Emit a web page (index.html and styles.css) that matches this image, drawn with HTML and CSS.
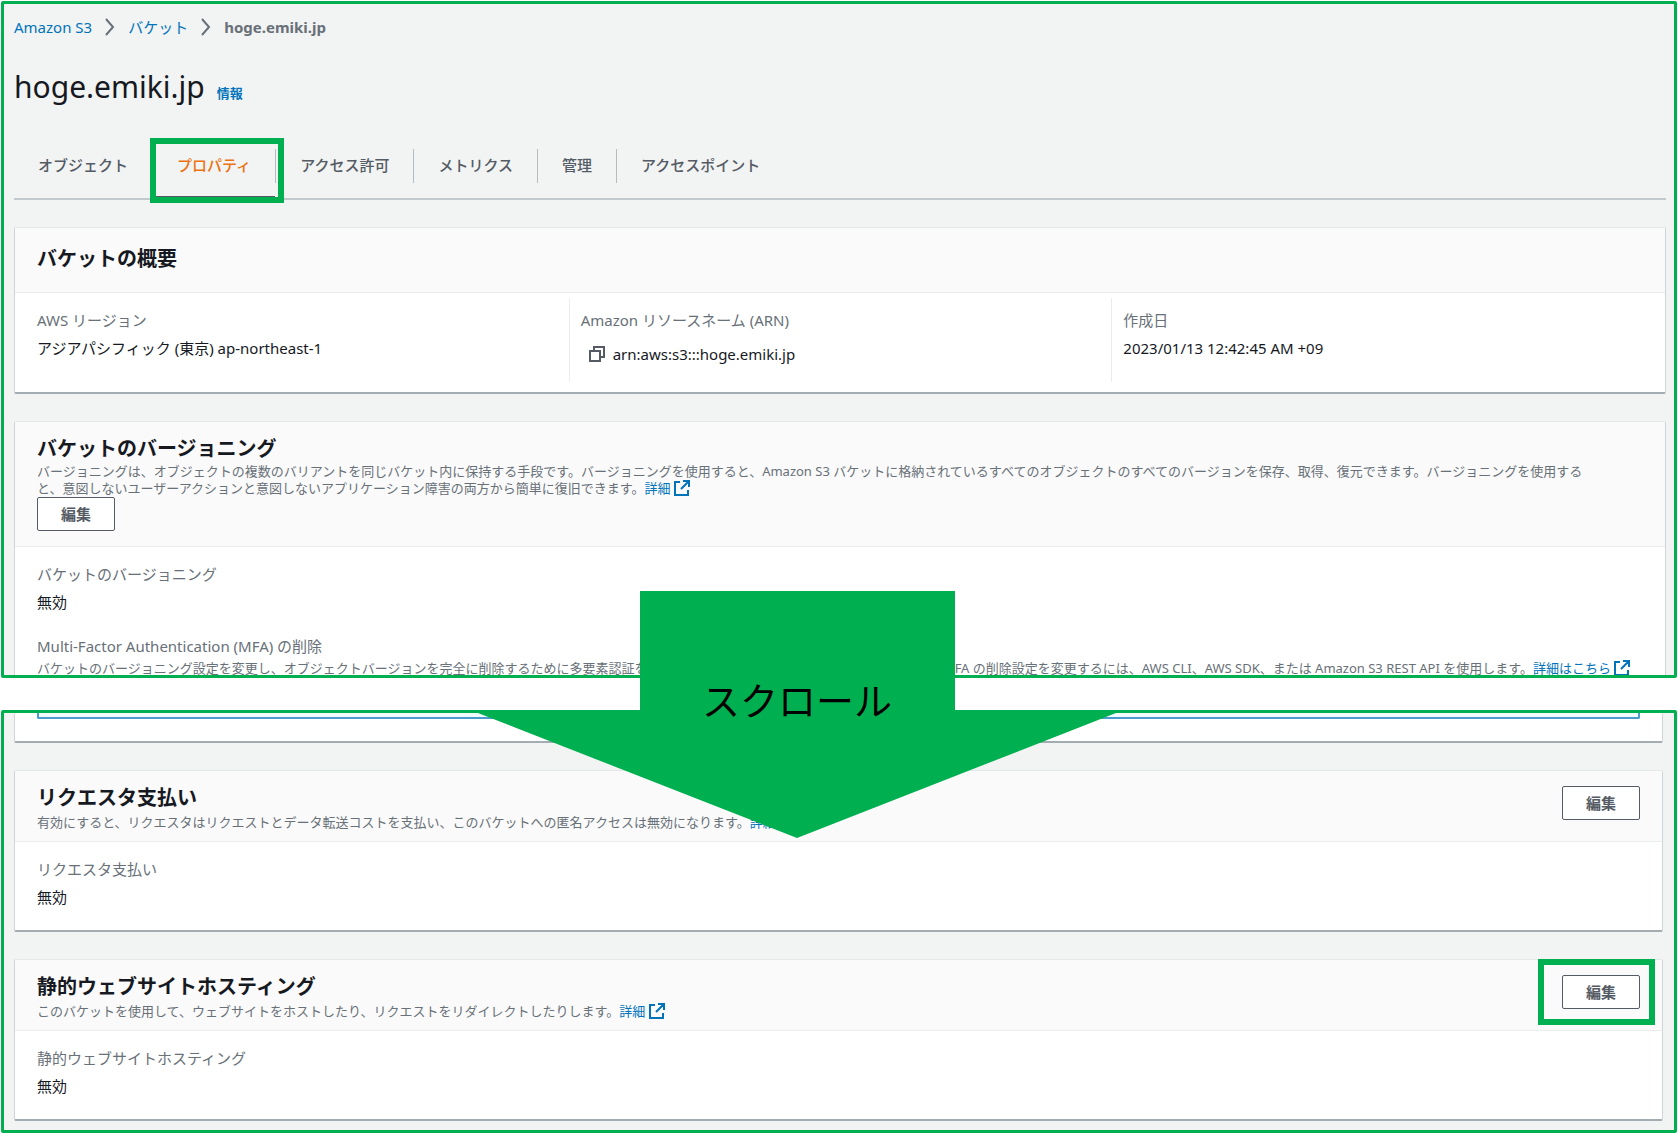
FILE: index.html
```
<!DOCTYPE html>
<html lang="ja">
<head>
  <meta charset="UTF-8">
  <meta name="viewport" content="width=device-width, initial-scale=1.0">
  <title>hoge.emiki.jp - Amazon S3</title>
  <link rel="stylesheet" href="styles.css">
</head>
<body>
  <main class="page">
    <section class="frame">
      <nav class="breadcrumb" aria-label="breadcrumb">
        <a href="#">Amazon S3</a>
        <svg class="chevron" viewBox="0 0 10 18"><path d="M1 1l7 8-7 8"/></svg>
        <a href="#">バケット</a>
        <svg class="chevron" viewBox="0 0 10 18"><path d="M1 1l7 8-7 8"/></svg>
        <span class="current">hoge.emiki.jp</span>
      </nav>

      <div class="title">
        <h1>hoge.emiki.jp</h1>
        <a href="#">情報</a>
      </div>

      <nav class="tabs">
        <a href="#">オブジェクト</a>
        <a href="#" class="active">プロパティ</a>
        <a href="#">アクセス許可</a>
        <a href="#">メトリクス</a>
        <a href="#">管理</a>
        <a href="#">アクセスポイント</a>
      </nav>

      <div class="card">
        <div class="card-header simple">
          <h2>バケットの概要</h2>
        </div>
        <dl class="columns">
          <div>
            <dt>AWS リージョン</dt>
            <dd>アジアパシフィック (東京) ap-northeast-1</dd>
          </div>
          <div>
            <dt>Amazon リソースネーム (ARN)</dt>
            <dd class="arn">
              <button type="button" class="copy" aria-label="コピー">
                <svg viewBox="0 0 16 16"><path d="M1 5h10v10H1zM5 5V1h10v10h-4"/></svg>
              </button>
              arn:aws:s3:::hoge.emiki.jp
            </dd>
          </div>
          <div>
            <dt>作成日</dt>
            <dd>2023/01/13 12:42:45 AM +09</dd>
          </div>
        </dl>
      </div>

      <div class="card">
        <div class="card-header stacked">
          <div>
            <h2>バケットのバージョニング</h2>
            <p>バージョニングは、オブジェクトの複数のバリアントを同じバケット内に保持する手段です。バージョニングを使用すると、Amazon S3 バケットに格納されているすべてのオブジェクトのすべてのバージョンを保存、取得、復元できます。バージョニングを使用すると、意図しないユーザーアクションと意図しないアプリケーション障害の両方から簡単に復旧できます。<a href="#">詳細 <svg class="external" viewBox="0 0 16 16"><path d="M6 2H1v13h13v-5M9 1h6v6M15 1L7 9"/></svg></a></p>
          </div>
          <button type="button" class="edit">編集</button>
        </div>
        <dl class="fields">
          <div>
            <dt>バケットのバージョニング</dt>
            <dd>無効</dd>
          </div>
          <div>
            <dt>Multi-Factor Authentication (MFA) の削除</dt>
            <dd class="note">バケットのバージョニング設定を変更し、オブジェクトバージョンを完全に削除するために多要素認証を必要とする、セキュリティの追加のレイヤーです。MFA の削除設定を変更するには、AWS CLI、AWS SDK、または Amazon S3 REST API を使用します。<a href="#">詳細はこちら <svg class="external" viewBox="0 0 16 16"><path d="M6 2H1v13h13v-5M9 1h6v6M15 1L7 9"/></svg></a></dd>
          </div>
        </dl>
      </div>
    </section>

    <section class="frame lower">
      <div class="card cut">
        <div class="info-box"></div>
      </div>

      <div class="card">
        <div class="card-header">
          <div>
            <h2>リクエスタ支払い</h2>
            <p>有効にすると、リクエスタはリクエストとデータ転送コストを支払い、このバケットへの匿名アクセスは無効になります。<a href="#">詳細</a></p>
          </div>
          <button type="button" class="edit">編集</button>
        </div>
        <dl class="fields">
          <div>
            <dt>リクエスタ支払い</dt>
            <dd>無効</dd>
          </div>
        </dl>
      </div>

      <div class="card">
        <div class="card-header">
          <div>
            <h2>静的ウェブサイトホスティング</h2>
            <p>このバケットを使用して、ウェブサイトをホストしたり、リクエストをリダイレクトしたりします。<a href="#">詳細 <svg class="external" viewBox="0 0 16 16"><path d="M6 2H1v13h13v-5M9 1h6v6M15 1L7 9"/></svg></a></p>
          </div>
          <button type="button" class="edit marked">編集</button>
        </div>
        <dl class="fields">
          <div>
            <dt>静的ウェブサイトホスティング</dt>
            <dd>無効</dd>
          </div>
        </dl>
      </div>
    </section>

    <div class="arrow">スクロール</div>
  </main>
</body>
</html>
```
FILE: styles.css
```
* {
  box-sizing: border-box;
}

body {
  margin: 0;
  background: #fff;
  color: #16191f;
  font-family: "Noto Sans", "Noto Sans CJK JP", sans-serif;
  font-size: 15px;
  line-height: 24px;
}

h1, h2, p, dl, dd {
  margin: 0;
}

a {
  color: #0073bb;
  text-decoration: none;
}

svg {
  fill: none;
  stroke: currentColor;
  stroke-width: 2;
}

/* Two framed views, the upper one cut off at its lower edge */
.page {
  position: relative;
  display: grid;
  grid-template-rows: 8fr 5fr;
  gap: 32px;
  height: 100vh;
  padding: 1px 1px 0;
}

.frame {
  min-height: 0;
  overflow: hidden;
  border: 3px solid #00b050;
  border-radius: 2px;
  background: #f2f3f3;
  padding: 0 8px 0 10px;
}

.lower {
  padding-right: 11px;
}

/* Page heading */
.breadcrumb {
  display: flex;
  align-items: center;
  gap: 13px;
  padding-top: 11px;
}

.chevron {
  width: 10px;
  height: 18px;
  color: #687078;
}

.current {
  color: #687078;
  font-weight: 700;
}

.title {
  display: flex;
  align-items: baseline;
  gap: 12px;
  margin-top: 28px;
}

.title h1 {
  font-size: 30px;
  font-weight: 400;
  line-height: 40px;
}

.title a {
  font-size: 13px;
  font-weight: 700;
}

/* Tabs */
.tabs {
  display: flex;
  margin-top: 42px;
  padding-bottom: 15px;
  border-bottom: 2px solid #c1c9cc;
}

.tabs a {
  position: relative;
  padding: 4px 24px 6px;
  border-right: 1px solid #b3bcc0;
  color: #545b64;
  font-weight: 500;
}

.tabs a:last-child {
  border-right: 0;
}

.tabs .active {
  color: #ec7211;
}

.tabs .active::before {
  content: "";
  position: absolute;
  right: 0;
  bottom: -15px;
  left: 0;
  height: 2px;
  background: #545b64;
}

.tabs .active::after,
.marked::after {
  content: "";
  position: absolute;
  border: 6px solid #00b050;
}

.tabs .active::after {
  inset: -11px -9px -20px -3px;
}

/* Cards */
.card {
  margin-top: 27px;
  border: 1px solid #e4e8e8;
  border-right-color: #d0d5d7;
  border-bottom: 2px solid #a3acb0;
  border-left-color: #d0d5d7;
  border-radius: 2px;
  background: #fff;
}

.card-header {
  display: flex;
  justify-content: space-between;
  align-items: flex-start;
  padding: 15px 22px 8px;
  border-bottom: 1px solid #eaeded;
  background: #fafafa;
}

.card-header h2 {
  font-size: 20px;
  font-weight: 700;
  line-height: 24px;
}

.card-header p {
  margin-top: 2px;
  color: #687078;
  font-size: 13px;
  line-height: 21px;
}

.simple {
  padding: 19px 22px 21px;
}

.stacked {
  display: block;
  padding-bottom: 15px;
}

.stacked p {
  padding-right: 40px;
  line-height: 17px;
}

.external {
  width: 16px;
  height: 16px;
  vertical-align: -3px;
}

.edit {
  position: relative;
  flex-shrink: 0;
  height: 34px;
  padding: 0 23px;
  border: 1px solid #545b64;
  border-radius: 2px;
  background: #fff;
  color: #545b64;
  font: inherit;
  font-weight: 700;
}

.marked::after {
  inset: -17px -16px -17px -25px;
}

dt {
  color: #687078;
}

dd {
  margin-top: 4px;
}

.columns {
  display: grid;
  grid-template-columns: 1fr 1fr 1fr;
  padding: 5px 11px 10px;
}

.columns > div {
  min-height: 84px;
  padding: 10px 11px;
}

.columns > div + div {
  border-left: 1px solid #eaeded;
}

.columns .arn {
  display: flex;
  align-items: center;
  gap: 8px;
  margin-top: 10px;
  padding-left: 8px;
}

.copy {
  display: flex;
  padding: 0;
  border: 0;
  background: none;
  color: #545b64;
}

.copy svg {
  width: 16px;
  height: 16px;
}

.fields {
  display: grid;
  gap: 20px;
  padding: 15px 22px 21px;
}

.fields .note {
  margin-top: 0;
  color: #687078;
  font-size: 13px;
  line-height: 20px;
}

/* End of the card above, scrolled out of view */
.cut {
  margin-top: 0;
  padding: 0 22px 22px;
  border-top: 0;
}

.info-box {
  height: 6px;
  border: 2px solid #4a9bd0;
  border-top: 0;
  border-radius: 0 0 2px 2px;
  background: #f1faff;
}

/* Scroll arrow laid over both frames */
.arrow {
  position: absolute;
  top: 591px;
  left: 478px;
  width: 638px;
  height: 247px;
  padding-top: 79px;
  background: #00b050;
  clip-path: polygon(162px 0, 477px 0, 477px 122px, 100% 122px, 50% 100%, 0 122px, 162px 122px);
  color: #000;
  font-size: 38px;
  line-height: 60px;
  text-align: center;
}
```
